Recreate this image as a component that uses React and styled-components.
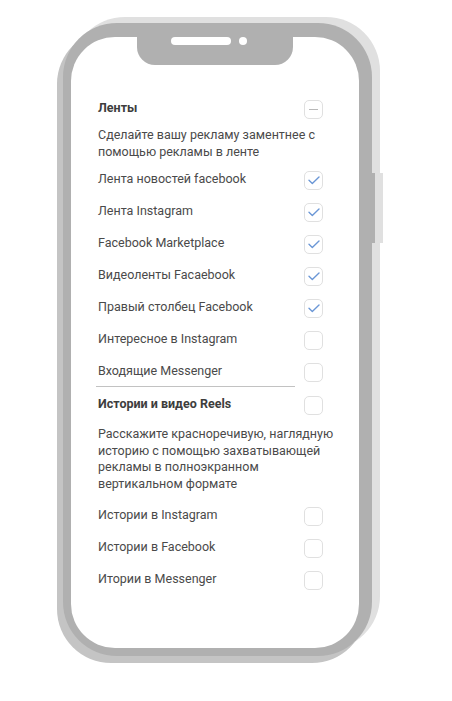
import React from "react";
import styled, { createGlobalStyle } from "styled-components";

const GlobalStyle = createGlobalStyle`
  html, body {
    margin: 0;
    padding: 0;
    background: #ffffff;
  }
  body {
    font-family: Roboto, "Liberation Sans", Arial, sans-serif;
  }
`;

const Stage = styled.div`
  width: 452px;
  height: 701px;
  box-sizing: border-box;
  padding: 23px 0 0 63px;
`;

const Frame = styled.div`
  position: relative;
  width: 309px;
  height: 633px;
  box-sizing: border-box;
  padding: 14px 13px 8px 8px;
  border-radius: 54px;
  background: #b0b0b0;
  box-shadow: 8px -6px 0 #e0e0e0, -6px 7px 0 #c4c4c4;
`;

const SideButton = styled.div`
  position: absolute;
  left: 309px;
  top: 150px;
  width: 8px;
  height: 70px;
  background: #e0e0e0;
  border-left: 3px solid #b0b0b0;
`;

const Notch = styled.div`
  position: absolute;
  top: 0;
  left: 74px;
  width: 156px;
  height: 42px;
  background: #b0b0b0;
  border-radius: 0 0 18px 18px;
  display: flex;
  align-items: flex-start;
  justify-content: center;
  gap: 8px;
  padding-top: 14px;
  box-sizing: border-box;
  z-index: 2;
`;

const Speaker = styled.span`
  display: block;
  width: 60px;
  height: 8px;
  margin-left: -12px;
  border-radius: 4px;
  background: #ffffff;
`;

const Camera = styled.span`
  display: block;
  width: 8px;
  height: 8px;
  border-radius: 50%;
  background: #ffffff;
`;

const Screen = styled.div`
  position: relative;
  height: 100%;
  box-sizing: border-box;
  padding: 54px 36px 0 27px;
  border-radius: 44px;
  background: #ffffff;
  overflow: hidden;
`;

const Row = styled.div`
  display: flex;
  align-items: center;
  justify-content: space-between;
  height: 32px;
  font-size: 12.5px;
  color: ${({ $bold }) => ($bold ? "#3d3d3d" : "#4a4a4a")};
  font-weight: ${({ $bold }) => ($bold ? 700 : 400)};
`;

const Description = styled.p`
  margin: ${({ $top }) => $top}px -20px ${({ $bottom }) => $bottom}px 0;
  font-size: 12.5px;
  line-height: ${({ $lh }) => $lh}px;
  color: #4a4a4a;
  white-space: nowrap;
`;

const Divider = styled.div`
  width: 199px;
  height: 1px;
  margin-left: -2px;
  background: #c2c2c2;
`;

const Box = styled.span`
  display: flex;
  align-items: center;
  justify-content: center;
  flex: none;
  width: 19px;
  height: 19px;
  margin-top: 4px;
  box-sizing: border-box;
  border: 1px solid #e0e0e0;
  border-radius: 5px;
  background: #ffffff;
`;

const Dash = styled.span`
  display: block;
  width: 9px;
  height: 1px;
  background: #b8b8b8;
`;

const Check = () => (
  <svg width="12" height="9" viewBox="0 0 12 9" fill="none">
    <path
      d="M1 4.2 L4.3 7.4 L11 1"
      stroke="#6b97d6"
      strokeWidth="1.4"
      strokeLinecap="round"
      strokeLinejoin="round"
    />
  </svg>
);

const Checkbox = ({ state }) => (
  <Box>
    {state === "checked" && <Check />}
    {state === "mixed" && <Dash />}
  </Box>
);

const feeds = [
  { label: "Лента новостей facebook", checked: true },
  { label: "Лента Instagram", checked: true },
  { label: "Facebook Marketplace", checked: true },
  { label: "Видеоленты Facaebook", checked: true },
  { label: "Правый столбец Facebook", checked: true },
  { label: "Интересное в Instagram", checked: false },
  { label: "Входящие Messenger", checked: false },
];

const stories = [
  "Истории в Instagram",
  "Истории в Facebook",
  "Итории в Messenger",
];

const App = () => {
  return (
    <>
      <GlobalStyle />
      <Stage>
        <Frame>
          <SideButton />
          <Notch>
            <Speaker />
            <Camera />
          </Notch>
          <Screen>
            <Row $bold>
              <span>Ленты</span>
              <Checkbox state="mixed" />
            </Row>
            <Description $top={3} $bottom={2} $lh={17}>
              Сделайте вашу рекламу заментнее с
              <br />
              помощью рекламы в ленте
            </Description>
            {feeds.map((item) => (
              <Row key={item.label}>
                <span>{item.label}</span>
                <Checkbox state={item.checked ? "checked" : "empty"} />
              </Row>
            ))}
            <Divider />
            <Row $bold>
              <span>Истории и видео Reels</span>
              <Checkbox state="empty" />
            </Row>
            <Description $top={7} $bottom={6} $lh={16.5}>
              Расскажите красноречивую, наглядную
              <br />
              историю с помощью захватывающей
              <br />
              рекламы в полноэкранном
              <br />
              вертикальном формате
            </Description>
            {stories.map((label) => (
              <Row key={label}>
                <span>{label}</span>
                <Checkbox state="empty" />
              </Row>
            ))}
          </Screen>
        </Frame>
      </Stage>
    </>
  );
};

export default App;
